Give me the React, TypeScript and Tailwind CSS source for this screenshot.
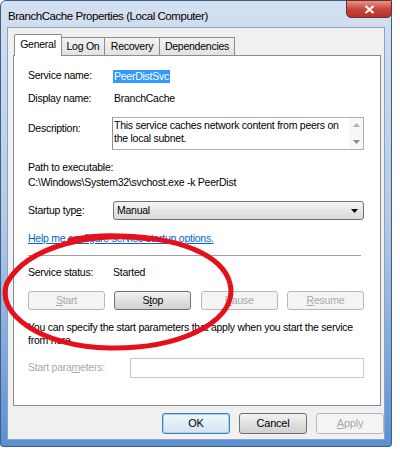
import type { ReactNode } from 'react';

const font = { fontFamily: '"Liberation Sans", Arial, sans-serif' };

const U = ({ children }: { children: ReactNode }) => <span className="underline underline-offset-1">{children}</span>;

const SmallButton = ({ children, disabled = false }: { children: ReactNode; disabled?: boolean }) => (
  <button
    className={
      disabled
        ? 'w-[77px] h-[19px] rounded-[3px] border border-[#b5b9bc] bg-[#f4f4f4] text-[#a8a8a8] text-[10.5px] tracking-[-0.2px]'
        : 'w-[77px] h-[19px] rounded-[3px] border border-[#707070] bg-gradient-to-b from-[#f2f2f2] to-[#d0d0d0] text-black text-[10.5px] tracking-[-0.2px]'
    }
  >
    {children}
  </button>
);

const DialogButton = ({ children, variant }: { children: ReactNode; variant: 'default' | 'normal' | 'disabled' }) => {
  const cls = {
    default: 'border-[#3c7fb1] bg-gradient-to-b from-[#eef6fb] to-[#d4e4ef] text-black shadow-[inset_0_0_0_1px_#a8d6f2]',
    normal: 'border-[#707070] bg-gradient-to-b from-[#f2f2f2] to-[#d0d0d0] text-black',
    disabled: 'border-[#b5b9bc] bg-[#f4f4f4] text-[#a8a8a8]',
  }[variant];
  return <button className={`w-[68px] h-[21px] rounded-[3px] border text-[11px] tracking-[-0.2px] ${cls}`}>{children}</button>;
};

const App = () => {
  return (
    <div className="w-[400px] h-[452px] bg-white relative overflow-hidden" style={font}>
      {/* window frame */}
      <div className="w-[392px] h-[447px] rounded-t-[6px] rounded-b-[3px] border border-[#3d5f86] bg-gradient-to-b from-[#d3e0ef] via-[#b3cae6] to-[#5b8fd3] flex flex-col">
        {/* title bar */}
        <div className="h-[26px] flex items-start justify-between">
          <span className="mt-[7px] ml-[7px] text-[11.5px] tracking-[-0.45px] text-black">BranchCache Properties (Local Computer)</span>
          <div className="w-[46px] h-[18px] -mt-px mr-[-1px] rounded-b-[5px] border border-[#6e2b2b] bg-gradient-to-b from-[#e3948a] via-[#c8453b] to-[#b8302a] flex items-center justify-center">
            <svg width="11" height="9" viewBox="0 0 11 9">
              <path d="M1.5 1 L9.5 8 M9.5 1 L1.5 8" stroke="#ffffff" strokeWidth="2.2" />
            </svg>
          </div>
        </div>

        {/* dialog body */}
        <div className="mx-[6px] h-[413px] border border-[#8aa3c0] bg-[#f0f0f0] flex flex-col">
          {/* tabs */}
          <div className="mt-[5px] ml-[6px] flex items-end h-[22px] text-[10.5px] tracking-[-0.25px] text-black">
            <div className="h-[22px] w-[48px] border border-b-0 border-[#898c95] bg-white rounded-t-[2px] flex items-center justify-center relative z-10 -mb-px pb-[2px]">General</div>
            <div className="h-[18px] w-[43px] border border-b-0 border-l-0 border-[#898c95] bg-gradient-to-b from-[#f2f2f2] to-[#e2e2e2] flex items-center justify-center">Log On</div>
            <div className="h-[18px] w-[55px] border border-b-0 border-l-0 border-[#898c95] bg-gradient-to-b from-[#f2f2f2] to-[#e2e2e2] flex items-center justify-center">Recovery</div>
            <div className="h-[18px] w-[75px] border border-b-0 border-l-0 border-[#898c95] bg-gradient-to-b from-[#f2f2f2] to-[#e2e2e2] flex items-center justify-center">Dependencies</div>
          </div>

          {/* tab panel */}
          <div className="ml-[5px] w-[368px] h-[351px] border border-[#898c95] bg-white pl-[14px] pr-[16px] flex flex-col text-[10.5px] tracking-[-0.25px] text-black">
            <div className="mt-[13px] h-[14px] flex items-center">
              <span className="w-[85px]">Service name:</span>
              <span className="bg-[#3399ff] text-white px-px leading-[13px]">PeerDistSvc</span>
            </div>
            <div className="mt-[9px] h-[14px] flex items-center">
              <span className="w-[86px]">Display name:</span>
              <span>BranchCache</span>
            </div>
            <div className="mt-[11px] flex items-start">
              <span className="w-[84px] mt-[5px] h-[14px] flex items-center">Description:</span>
              <div className="flex-1 h-[33px] border border-[#abadb3] border-l-[#8e8f8f] flex">
                <p className="flex-1 pl-px pt-px leading-[13px]">
                  This service caches network content from peers on the local subnet.
                </p>
                <div className="w-[14px] flex flex-col items-center justify-between py-[5px] bg-[#f7f7f7]">
                  <svg width="7" height="4" viewBox="0 0 7 4"><path d="M0 4 L3.5 0 L7 4 Z" fill="#b0b0b0" /></svg>
                  <svg width="7" height="4" viewBox="0 0 7 4"><path d="M0 0 L3.5 4 L7 0 Z" fill="#8a8a8a" /></svg>
                </div>
              </div>
            </div>
            <div className="mt-[11px] h-[14px] flex items-center">Path to executable:</div>
            <div className="mt-px h-[14px] flex items-center">C:\Windows\System32\svchost.exe -k PeerDist</div>
            <div className="mt-[11px] flex items-center">
              <span className="w-[85px]">
                Startup typ<U>e</U>:
              </span>
              <div className="flex-1 h-[19px] rounded-[3px] border border-[#707070] bg-gradient-to-b from-[#f4f4f4] to-[#dadada] flex items-center justify-between pl-[3px] pr-[5px]">
                <span>Manual</span>
                <svg width="7" height="4" viewBox="0 0 7 4"><path d="M0 0 L3.5 4 L7 0 Z" fill="#000" /></svg>
              </div>
            </div>
            <div className="mt-[12px] h-[14px] flex items-center">
              <span className="text-[#0066cc] underline underline-offset-1">Help me configure service startup options.</span>
            </div>
            <div className="mt-[9px] h-px bg-[#a0a0a0] mr-[3px]" />
            <div className="mt-[10px] h-[14px] flex items-center">
              <span className="w-[85px]">Service status:</span>
              <span>Started</span>
            </div>
            <div className="mt-[11px] flex justify-between">
              <SmallButton disabled>
                <U>S</U>tart
              </SmallButton>
              <SmallButton>
                S<U>t</U>op
              </SmallButton>
              <SmallButton disabled>
                <U>P</U>ause
              </SmallButton>
              <SmallButton disabled>
                <U>R</U>esume
              </SmallButton>
            </div>
            <p className="mt-[11px] leading-[13px]">
              You can specify the start parameters that apply when you start the service from here.
            </p>
            <div className="mt-[11px] flex items-center">
              <span className="w-[102px] text-[#a8a8a8]">
                Start para<U>m</U>eters:
              </span>
              <div className="flex-1 h-[20px] border border-[#c8c9ca] bg-white" />
            </div>
          </div>

          {/* dialog buttons */}
          <div className="mt-[7px] ml-[154px] flex gap-[9px]">
            <DialogButton variant="default">OK</DialogButton>
            <DialogButton variant="normal">Cancel</DialogButton>
            <DialogButton variant="disabled">
              <U>A</U>pply
            </DialogButton>
          </div>
        </div>
      </div>

      {/* hand-drawn red ellipse */}
      <svg className="absolute left-0 top-[225px] pointer-events-none" width="240" height="130" viewBox="0 0 240 130">
        <path
          d="M150 14 C 95 6, 28 20, 7 58 C -5 88, 40 122, 110 123 C 175 124, 232 100, 231 65 C 229 35, 190 13, 120 11 C 100 10, 85 12, 70 15"
          fill="none"
          stroke="#e4101c"
          strokeWidth="5"
          strokeLinecap="round"
        />
      </svg>
    </div>
  );
};

export default App;
